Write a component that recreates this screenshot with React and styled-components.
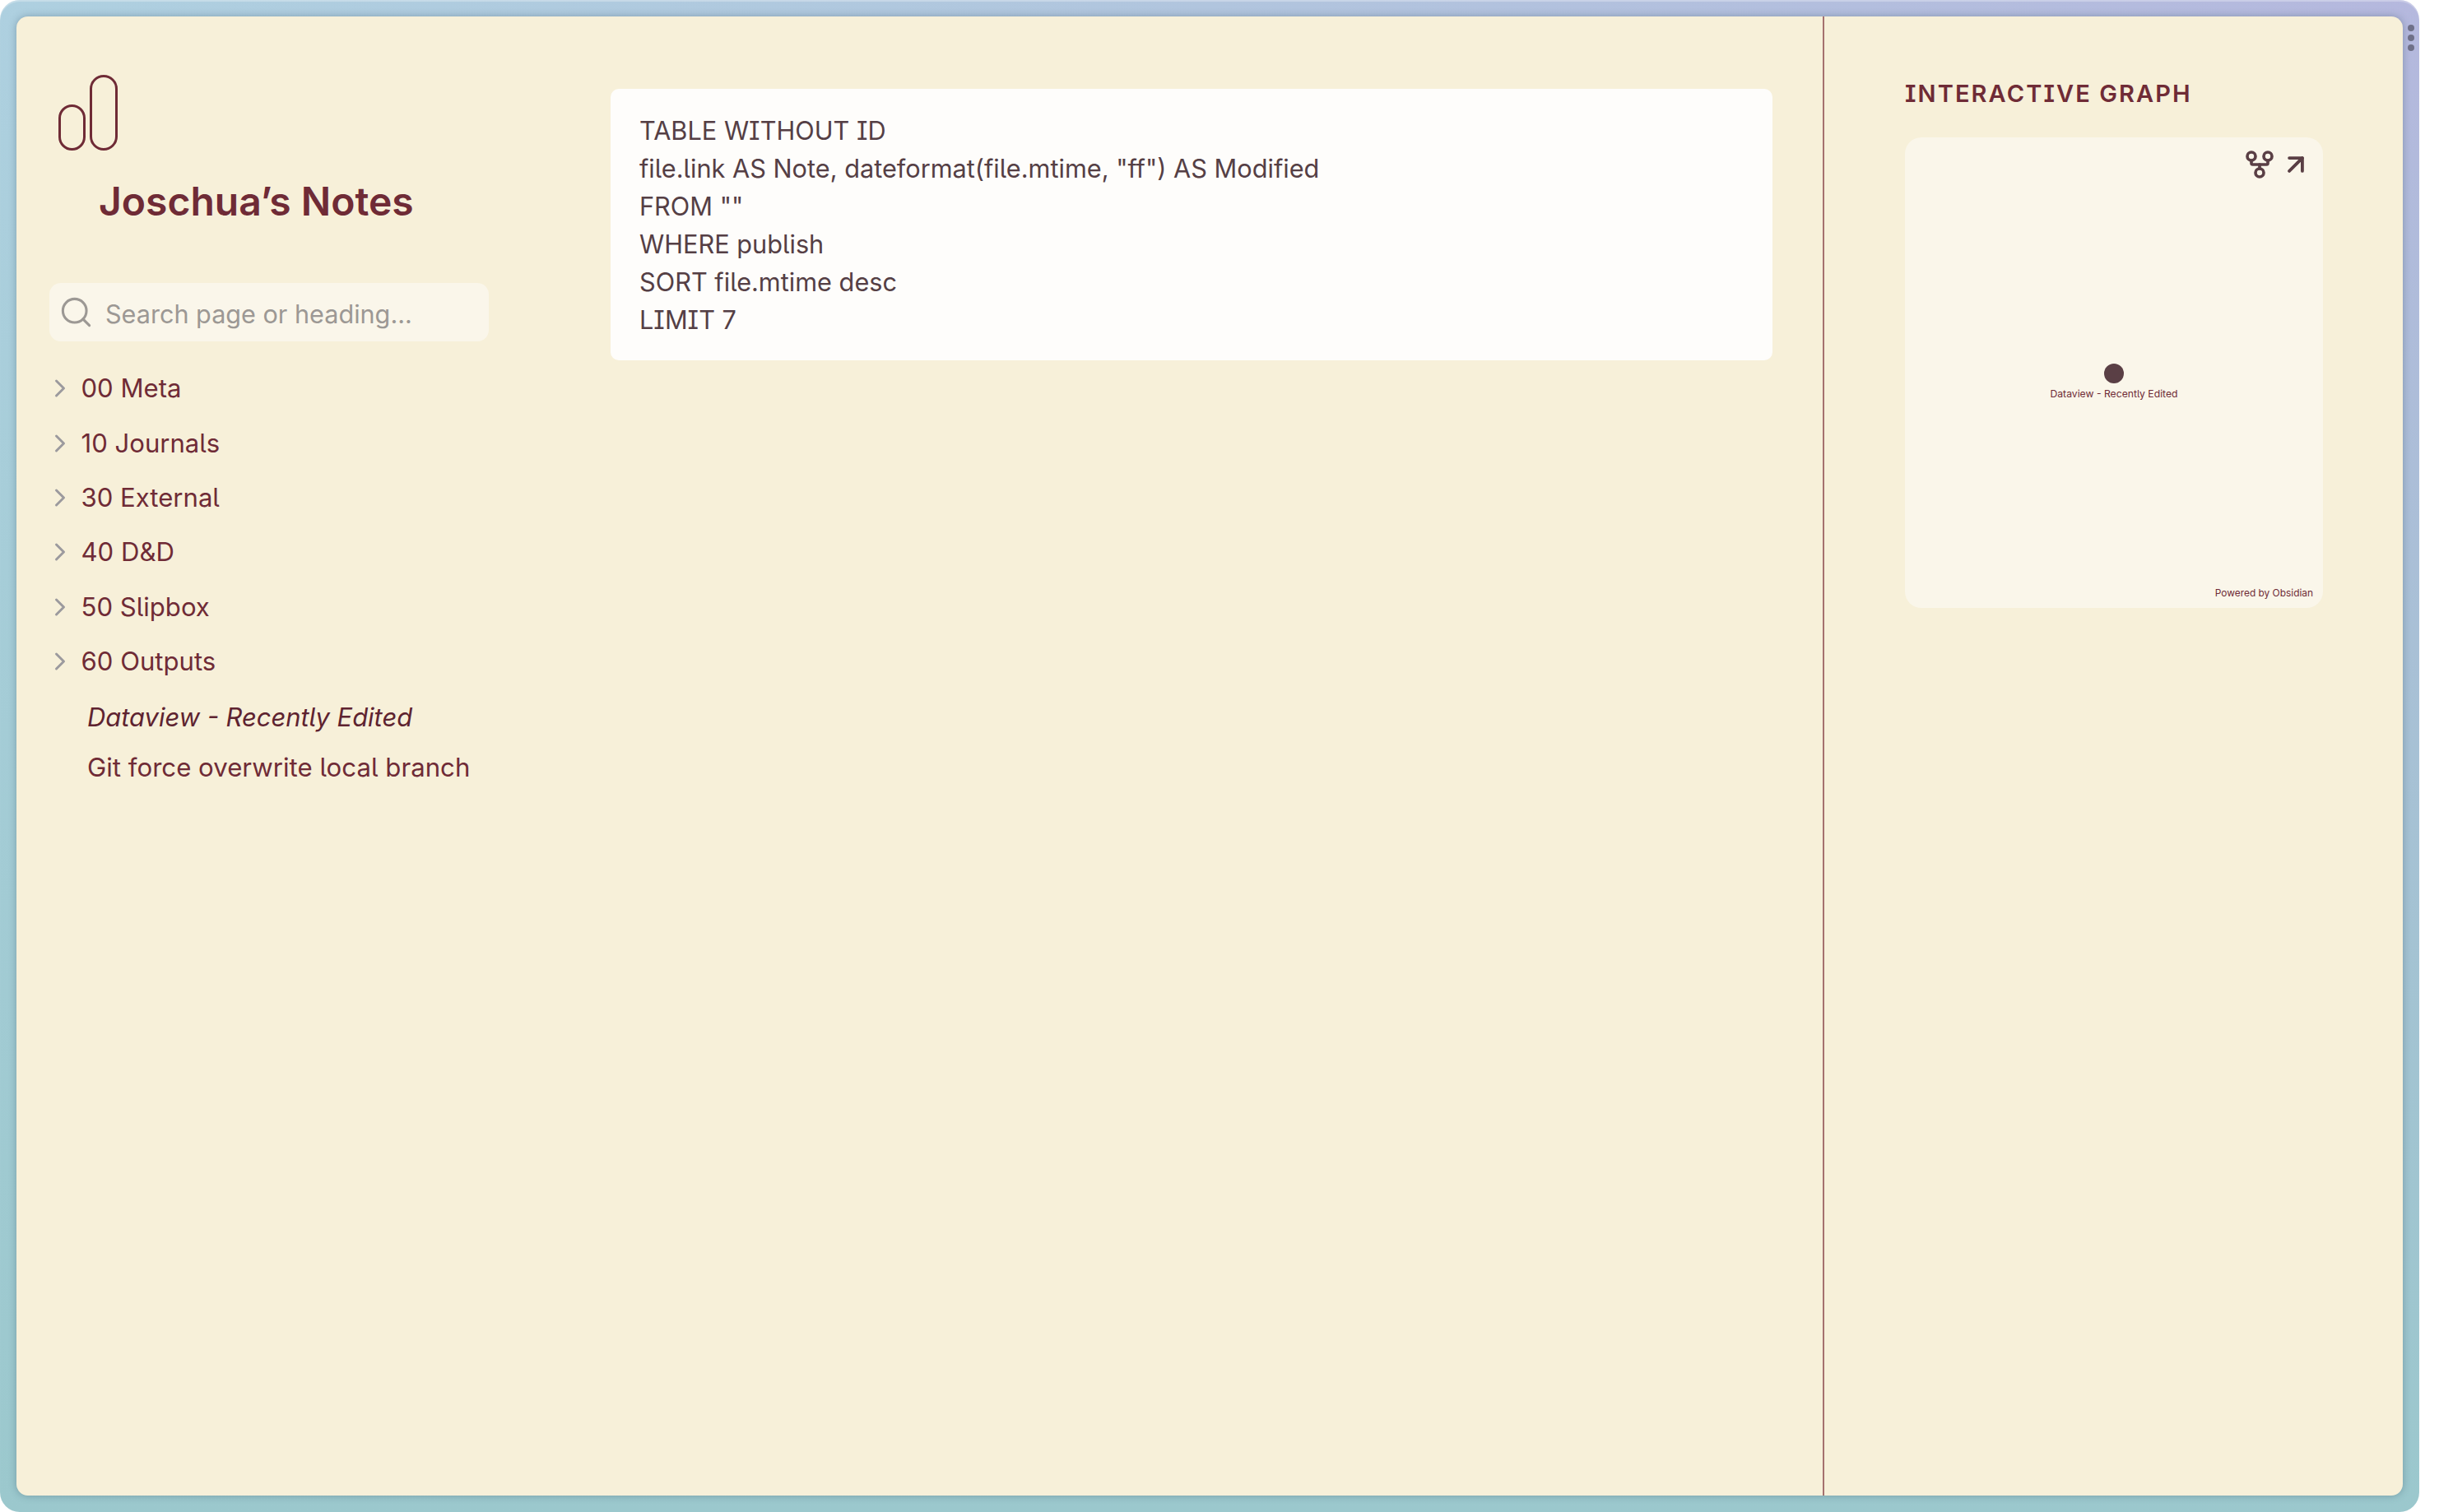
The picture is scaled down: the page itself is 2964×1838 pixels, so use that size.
import React from "react";
import styled, { createGlobalStyle } from "styled-components";
import { ChevronRight, Search, GitFork, ArrowUpRight } from "lucide-react";

const Global = createGlobalStyle`
  html, body { margin: 0; padding: 0; background: #fff; }
  body { font-family: Inter, "Noto Sans", sans-serif; font-feature-settings: "cv08" 1, "cv05" 1; }
  * { box-sizing: border-box; }
`;

const Frame = styled.div`
  position: relative;
  width: 2940px;
  height: 1838px;
  padding: 20px;
  border-radius: 24px;
  background:
    linear-gradient(to bottom, rgba(155, 201, 205, 0) 0%, rgba(155, 201, 205, 0.45) 40%, #9bc8cd 100%),
    linear-gradient(to right, #aed0e0 0%, #b1c5de 50%, #b5b8de 100%);
  box-shadow: inset 0 2px 1px rgba(255, 255, 255, 0.3);
`;

const Panel = styled.div`
  display: grid;
  grid-template-columns: 2197px 703px;
  height: 1798px;
  background: #f7f0d9;
  border-radius: 14px;
  box-shadow: 0 0 10px rgba(40, 70, 90, 0.35);
  overflow: hidden;
`;

const Main = styled.main`
  display: grid;
  grid-template-columns: 722px 1412px;
  align-content: start;
  border-right: 2px solid #a5716f;
`;

const Sidebar = styled.aside`
  display: flex;
  flex-direction: column;
  padding: 71px 0 0 40px;
`;

const Logo = styled.svg`
  display: block;
  width: 72px;
  height: 92px;
  margin-left: 11px;
`;

const Title = styled.h1`
  margin: 33px 0 0 60px;
  font-size: 48px;
  line-height: 58px;
  font-weight: 600;
  color: #6f2b36;
  white-space: nowrap;
`;

const SearchBox = styled.div`
  display: flex;
  align-items: center;
  gap: 14.4px;
  width: 534px;
  height: 71px;
  margin-top: 70px;
  padding: 0 0 0 10.6px;
  background: #faf6ea;
  border-radius: 14px;
  color: #9c9894;
  font-size: 30.6px;
  white-space: nowrap;
  span { position: relative; top: 1.5px; }
`;

const Tree = styled.nav`
  display: flex;
  flex-direction: column;
  margin-top: 24px;
`;

const FolderRow = styled.div`
  display: flex;
  align-items: center;
  height: 66.4px;
  color: #6f2b36;
  font-size: 31.1px;
  white-space: nowrap;
  svg { color: #9c9a9e; margin-left: -5px; margin-right: 7.5px; flex: none; }
`;

const FileRow = styled.div`
  display: flex;
  align-items: center;
  height: 62px;
  margin-left: 46px;
  color: #6f2b36;
  font-size: ${(p) => (p.$active ? "30.9px" : "31.2px")};
  white-space: nowrap;
  font-style: ${(p) => (p.$active ? "italic" : "normal")};
  ${(p) => p.$active && "color: #5e2330; margin-top: 3px;"}
`;

const Code = styled.pre`
  margin: 88px 0 0 0;
  padding: 28px 35px 0;
  height: 330px;
  background: #fefdfb;
  border-radius: 10px;
  font-family: inherit;
  font-size: 30.7px;
  line-height: 46px;
  color: #553f45;
`;

const Aside = styled.aside`
  padding: 74px 97px 0 98px;
`;

const GraphTitle = styled.h3`
  margin: 0;
  font-size: 29px;
  line-height: 40px;
  font-weight: 600;
  letter-spacing: 2.1px;
  color: #6f2b36;
  white-space: nowrap;
`;

const GraphCard = styled.div`
  position: relative;
  height: 572px;
  margin-top: 33px;
  background: #faf6ea;
  border-radius: 20px;
`;

const GraphTools = styled.div`
  position: absolute;
  top: 13px;
  right: 14px;
  display: flex;
  align-items: center;
  gap: 5.5px;
  color: #5a3f45;
`;

const Node = styled.div`
  position: absolute;
  top: 275px;
  left: 242px;
  width: 24px;
  height: 24px;
  border-radius: 50%;
  background: #5a3f45;
`;

const NodeLabel = styled.div`
  position: absolute;
  top: 303.5px;
  left: 0;
  right: 0;
  text-align: center;
  font-size: 12.2px;
  line-height: 16px;
  color: #6f2b36;
`;

const Powered = styled.div`
  position: absolute;
  right: 12px;
  bottom: 10px;
  font-size: 11.9px;
  line-height: 16px;
  color: #6f2b36;
`;

const Handle = styled.div`
  position: absolute;
  top: 30px;
  left: 2926px;
  display: flex;
  flex-direction: column;
  gap: 4px;
`;

const Dot = styled.span`
  display: block;
  width: 8px;
  height: 8px;
  border-radius: 50%;
  background: #6f7088;
`;

const folders = ["00 Meta", "10 Journals", "30 External", "40 D&D", "50 Slipbox", "60 Outputs"];

export default function App() {
  return (
    <>
      <Global />
      <Frame>
        <Panel>
          <Main>
            <Sidebar>
              <Logo viewBox="0 0 72 92" fill="none" stroke="#6f2b36" strokeWidth="3">
                <rect x="1.5" y="37.5" width="30" height="53" rx="15" />
                <rect x="39.5" y="1.5" width="31" height="89" rx="15.5" />
              </Logo>
              <Title>Joschua’s Notes</Title>
              <SearchBox>
                <Search size={43} strokeWidth={1.7} />
                <span>Search page or heading...</span>
              </SearchBox>
              <Tree>
                {folders.map((f) => (
                  <FolderRow key={f}>
                    <ChevronRight size={36} strokeWidth={2} />
                    <span>{f}</span>
                  </FolderRow>
                ))}
                <FileRow $active>Dataview - Recently Edited</FileRow>
                <FileRow>Git force overwrite local branch</FileRow>
              </Tree>
            </Sidebar>
            <Code>{`TABLE WITHOUT ID
file.link AS Note, dateformat(file.mtime, "ff") AS Modified
FROM ""
WHERE publish
SORT file.mtime desc
LIMIT 7`}</Code>
          </Main>
          <Aside>
            <GraphTitle>INTERACTIVE GRAPH</GraphTitle>
            <GraphCard>
              <GraphTools>
                <GitFork size={40} strokeWidth={2.2} />
                <ArrowUpRight size={38} strokeWidth={2.4} />
              </GraphTools>
              <Node />
              <NodeLabel>Dataview - Recently Edited</NodeLabel>
              <Powered>Powered by Obsidian</Powered>
            </GraphCard>
          </Aside>
        </Panel>
        <Handle>
          <Dot />
          <Dot />
          <Dot />
        </Handle>
      </Frame>
    </>
  );
}
